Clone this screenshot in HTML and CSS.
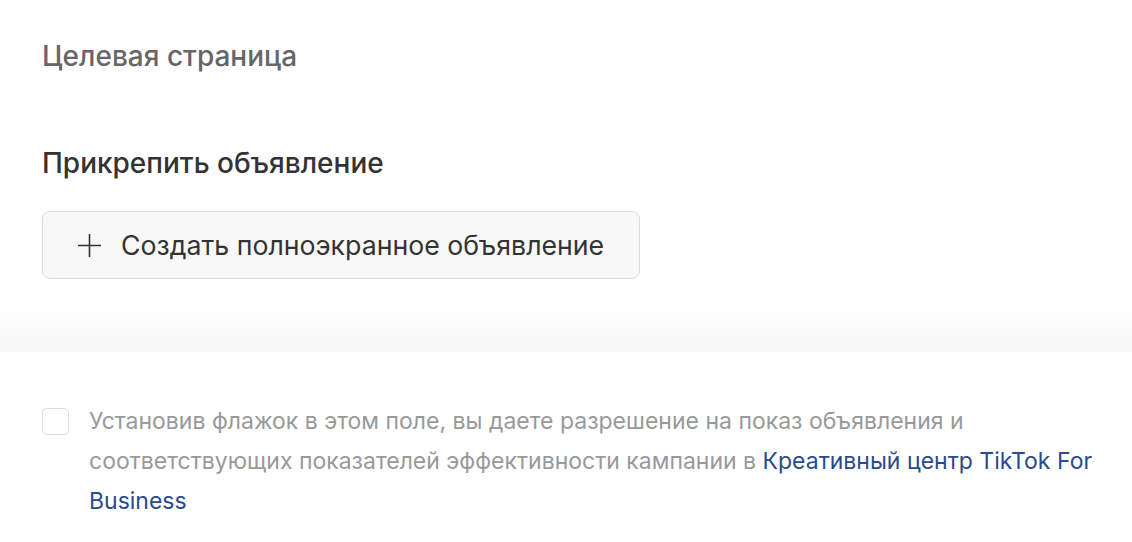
FILE: index.html
```html
<!DOCTYPE html>
<html>
<head>
  <meta charset="utf-8">
  <title>Целевая страница</title>
  <link rel="stylesheet" href="styles.css">
</head>
<body>
  <section class="top">
    <h2 class="label">Целевая страница</h2>
    <h3 class="attach-title">Прикрепить объявление</h3>
    <button class="create-btn" type="button">
      <svg class="plus" width="23" height="23" viewBox="0 0 23 23"><path d="M11.5 0v23M0 11.5h23" stroke="#333" stroke-width="1.6" fill="none"/></svg>
      <span>Создать полноэкранное объявление</span>
    </button>
  </section>
  <div class="band"></div>
  <section class="consent">
    <span class="box"></span>
    <p>Установив флажок в этом поле, вы даете разрешение на показ объявления и соответствующих показателей эффективности кампании в <a href="#">Креативный центр TikTok For Business</a></p>
  </section>
</body>
</html>
```

FILE: styles.css
```css
body { margin: 0; background: #fff; font-family: Inter, "Liberation Sans", sans-serif; color: #333; }
.top { padding: 39px 42px 0; }
.label { margin: 0; font-size: 28px; line-height: 34px; font-weight: 500; color: #666; }
.attach-title { margin: 73px 0 0; font-size: 28px; line-height: 34px; font-weight: 500; color: #333; }
.create-btn { margin-top: 31px; display: flex; align-items: center; gap: 20px; width: 598px; height: 68px; padding: 0 0 0 35px; background: #f8f8f8; border: 1.5px solid #ddd; border-radius: 8px; font-family: inherit; font-size: 26.7px; color: #333; }
.band { margin-top: 31px; height: 42px; background: linear-gradient(#fff, #f7f7f7); }
.consent { display: flex; gap: 20px; padding: 56px 30px 0 42px; }
.box { flex: none; width: 25px; height: 25px; border: 1.5px solid #ddd; border-radius: 5px; }
.consent p { margin: -7px 0 0; font-size: 23px; line-height: 40px; color: #999; }
.consent a { color: #2b4a8e; text-decoration: none; }
```
